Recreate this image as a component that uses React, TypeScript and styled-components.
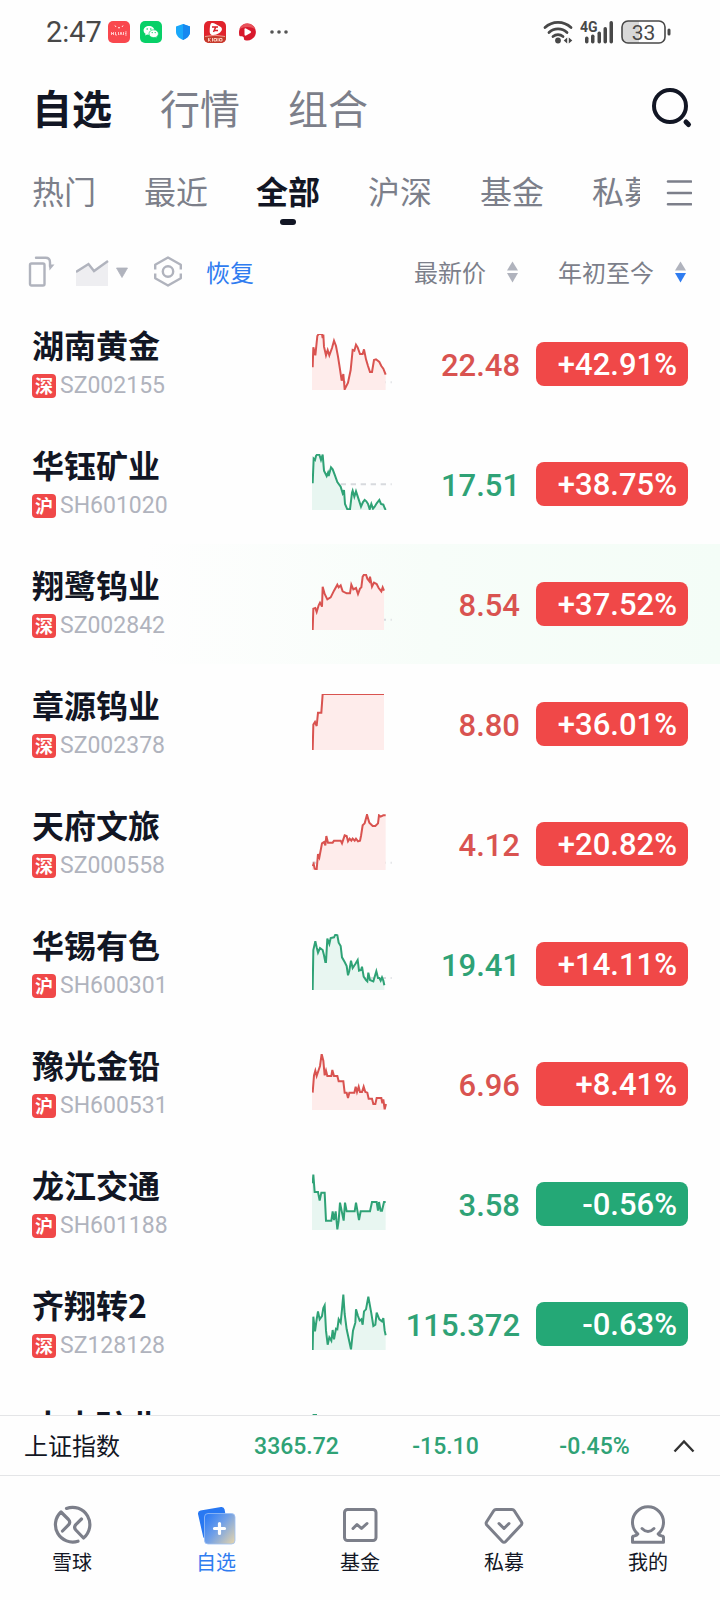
import React from "react";
import styled, { createGlobalStyle } from "styled-components";

const RED = "#f04848";
const GREEN = "#24a876";
const LINE_RED = "#d95350";
const LINE_GREEN = "#2fa276";
const INK = "#121624";
const GREY = "#7c7f8a";
const PALE = "#b0b3bd";
const BLUE = "#2f7cf0";

const CJK = `"Noto Sans CJK SC", sans-serif`;
const NUM = `Roboto, "Noto Sans CJK SC", sans-serif`;

const GlobalStyle = createGlobalStyle`
  * { box-sizing: border-box; }
  body { margin: 0; background: #fefefe; color: ${INK}; font-family: ${CJK}; }
  button { border: 0; padding: 0; margin: 0; background: none; font: inherit; color: inherit; cursor: pointer; }
  svg { display: block; flex: none; }
`;

const Screen = styled.div`
  height: 100vh;
  display: flex;
  flex-direction: column;
  background: #fefefe;
`;

/* ---------- status bar ---------- */

const StatusBar = styled.div`
  flex: none;
  height: 64px;
  padding: 0 49px 0 46px;
  display: flex;
  align-items: center;
  justify-content: space-between;
  color: #484848;
  font-family: ${NUM};
`;

const StatusGroup = styled.div<{ $gap: number }>`
  display: flex;
  align-items: center;
  gap: ${(p) => p.$gap}px;
`;

const Clock = styled.time`
  font-size: 29px;
  line-height: 32px;
`;

/* ---------- page header ---------- */

const Header = styled.header`
  flex: none;
  height: 88px;
  padding: 0 26px 0 32px;
  display: flex;
  align-items: center;
  justify-content: space-between;
`;

const Sections = styled.nav`
  display: flex;
  gap: 48px;
  padding-bottom: 2px;
`;

const SectionLink = styled.a<{ $active?: boolean }>`
  font-size: 40px;
  line-height: 48px;
  font-weight: ${(p) => (p.$active ? 700 : 400)};
  color: ${(p) => (p.$active ? INK : GREY)};
  text-decoration: none;
`;

const GroupBar = styled.div`
  flex: none;
  height: 88px;
  padding: 0 28px 8px 32px;
  display: flex;
  align-items: stretch;
  justify-content: space-between;
  gap: 26px;
`;

const GroupTabs = styled.div`
  flex: 1;
  min-width: 0;
  overflow: hidden;
  display: flex;
  gap: 48px;
`;

const GroupTab = styled.button<{ $active?: boolean }>`
  position: relative;
  flex: none;
  padding-bottom: 4px;
  font-size: 32px;
  line-height: 40px;
  white-space: nowrap;
  font-weight: ${(p) => (p.$active ? 700 : 400)};
  color: ${(p) => (p.$active ? INK : GREY)};
  &::after {
    content: "";
    display: ${(p) => (p.$active ? "block" : "none")};
    position: absolute;
    left: 50%;
    bottom: 7px;
    width: 16px;
    height: 6px;
    margin-left: -8px;
    border-radius: 3px;
    background: ${INK};
  }
`;

const IconButton = styled.button`
  display: flex;
  align-items: center;
`;

/* ---------- quotes table ---------- */

const ListArea = styled.main`
  flex: 1;
  min-height: 0;
  overflow-y: auto;
  scrollbar-width: none;
`;

const Quotes = styled.table`
  width: 100%;
  table-layout: fixed;
  border-collapse: collapse;
`;

const NameCol = styled.col``;
const ChartCol = styled.col`
  width: 88px;
`;
const PriceCol = styled.col`
  width: 120px;
`;
const ChangeCol = styled.col`
  width: 200px;
`;

const HeadCell = styled.th<{ $right?: number }>`
  height: 64px;
  padding: 0 ${(p) => p.$right ?? 0}px 0 0;
  font-weight: 400;
  color: ${GREY};
`;

const Tools = styled.div`
  display: flex;
  align-items: center;
  gap: 20px;
  padding-left: 28px;
`;

const Restore = styled.button`
  font-size: 24px;
  line-height: 32px;
  color: ${BLUE};
`;

const SortButton = styled.button`
  display: flex;
  align-items: center;
  gap: 20px;
  margin-left: auto;
  font-size: 24px;
  line-height: 32px;
  white-space: nowrap;
`;

const Row = styled.tr<{ $flash?: boolean }>`
  height: 120px;
  background: ${(p) => (p.$flash ? "linear-gradient(90deg, #fefefe 20%, #f7fdf9 60%, #f4fdf7 100%)" : "none")};
`;

const Cell = styled.td<{ $top: number; $left?: number; $right?: number }>`
  padding: ${(p) => p.$top}px ${(p) => p.$right ?? 0}px 0 ${(p) => p.$left ?? 0}px;
  vertical-align: top;
`;

const StockName = styled.div`
  font-size: 32px;
  line-height: 40px;
  font-weight: 700;
  white-space: nowrap;
`;

const CodeLine = styled.div`
  display: flex;
  align-items: center;
  gap: 4px;
  margin-top: 10px;
  font-family: ${NUM};
  font-size: 23px;
  line-height: 24px;
  color: ${PALE};
`;

const Market = styled.span`
  width: 24px;
  height: 24px;
  border-radius: 4px;
  background: ${RED};
  color: #fff;
  font-family: ${CJK};
  font-size: 18px;
  font-weight: 700;
  line-height: 22px;
  text-align: center;
`;

const Price = styled.div<{ $up: boolean }>`
  font-family: ${NUM};
  font-size: 31px;
  font-weight: 500;
  line-height: 44px;
  text-align: right;
  color: ${(p) => (p.$up ? LINE_RED : LINE_GREEN)};
`;

const Change = styled.button<{ $up: boolean }>`
  display: block;
  width: 100%;
  height: 44px;
  padding: 2px 11px 0 0;
  border-radius: 8px;
  background: ${(p) => (p.$up ? RED : GREEN)};
  color: #fff;
  font-family: ${NUM};
  font-size: 31px;
  font-weight: 500;
  line-height: 42px;
  text-align: right;
`;

/* ---------- index bar and bottom navigation ---------- */

const IndexBar = styled.section`
  flex: none;
  height: 61px;
  padding: 0 24px;
  display: grid;
  grid-template-columns: 198px 1fr 1fr 1fr 27px;
  align-items: center;
  border-top: 1px solid #e4e5e7;
  border-bottom: 1px solid #e4e5e7;
`;

const IndexName = styled.span`
  padding-bottom: 2px;
  font-size: 24px;
  line-height: 32px;
`;

const IndexValue = styled.span`
  padding-top: 2px;
  font-family: ${NUM};
  font-size: 23px;
  font-weight: 500;
  line-height: 32px;
  text-align: center;
  color: ${LINE_GREEN};
`;

const BottomNav = styled.nav`
  flex: none;
  height: 124px;
  display: flex;
`;

const NavItem = styled.a<{ $active?: boolean }>`
  flex: 1;
  display: flex;
  flex-direction: column;
  align-items: center;
  gap: 5px;
  padding-top: 29px;
  font-size: 20px;
  line-height: 24px;
  color: ${(p) => (p.$active ? BLUE : INK)};
  text-decoration: none;
`;

/* ---------- data ---------- */

type Stock = {
  name: string;
  points: string;
  up: boolean;
  quote?: { market: string; code: string; price: string; change: string };
  flash?: boolean;
  base?: number;
};

const stocks: Stock[] = [
  {
    name: "湖南黄金", up: true, base: 145,
    quote: { market: "深", code: "SZ002155", price: "22.48", change: "+42.91%" },
    points: "2,100 4,40 10,64 16,6 20,0 30,0 32,12 34,2 36,38 42,64 47,48 52,64 60,42 66,20 72,36 78,68 84,106 89,140 94,120 98,166 108,146 116,108 122,48 127,50 132,32 137,40 144,60 152,60 156,46 162,76 168,96 174,114 180,114 186,78 192,76 202,84 208,96 214,104 221,122",
  },
  {
    name: "华钰矿业", up: false, base: 91,
    quote: { market: "沪", code: "SH601020", price: "17.51", change: "+38.75%" },
    points: "2,88 5,14 9,18 12,6 15,2 22,2 27,18 32,2 36,50 44,66 48,56 50,66 57,40 62,46 68,62 76,84 86,98 92,118 96,108 99,150 106,166 114,166 120,116 122,110 127,128 132,112 140,136 147,158 153,144 158,138 163,142 168,150 173,166 178,150 183,164 188,158 194,148 202,138 207,150 214,152 218,162 221,168",
  },
  {
    name: "翔鹭钨业", up: true, flash: true, base: 137,
    quote: { market: "深", code: "SZ002842", price: "8.54", change: "+37.52%" },
    points: "2,168 4,104 10,102 14,114 20,94 24,86 30,98 32,38 38,60 46,76 56,70 66,50 76,32 80,40 86,34 92,52 104,58 114,58 118,32 124,46 132,42 138,60 144,44 148,40 152,8 156,2 162,2 166,14 172,22 174,8 180,38 186,26 194,30 200,42 208,52 212,40 216,50",
  },
  {
    name: "章源钨业", up: true,
    quote: { market: "深", code: "SZ002378", price: "8.80", change: "+36.01%" },
    points: "2,168 4,92 9,84 14,96 18,56 28,56 32,0 216,0",
  },
  {
    name: "天府文旅", up: true, base: 146,
    quote: { market: "深", code: "SZ000558", price: "4.12", change: "+20.82%" },
    points: "2,156 5,150 8,164 14,166 18,120 22,130 30,88 36,84 40,94 43,66 48,86 62,86 66,80 86,80 90,88 98,64 104,66 108,82 113,74 118,80 122,74 128,80 132,74 138,82 144,80 147,66 152,34 158,28 165,2 172,26 182,36 190,36 198,28 201,4 206,8 214,4 221,4",
  },
  {
    name: "华锡有色", up: false, base: 132,
    quote: { market: "沪", code: "SH600301", price: "19.41", change: "+14.11%" },
    points: "2,168 4,48 10,22 14,40 18,56 24,42 32,48 36,64 40,84 42,84 46,14 52,30 56,12 66,10 70,2 76,4 80,26 86,36 90,70 98,84 104,96 108,124 112,110 117,80 122,102 130,90 137,78 141,110 147,108 150,98 155,128 162,138 166,142 169,116 174,138 184,142 193,112 198,132 202,132 206,140 210,130 214,140 217,154",
  },
  {
    name: "豫光金铅", up: true,
    quote: { market: "沪", code: "SH600531", price: "6.96", change: "+8.41%" },
    points: "2,116 6,64 10,50 14,66 20,48 24,36 29,0 34,20 38,64 42,50 46,66 58,66 61,48 66,66 76,66 80,82 94,82 98,116 104,116 108,132 112,116 127,116 131,98 135,114 140,98 144,114 150,114 155,98 160,114 166,116 170,134 180,134 184,150 190,150 194,132 208,132 211,148 214,136 218,166 222,150",
  },
  {
    name: "龙江交通", up: false,
    quote: { market: "沪", code: "SH601188", price: "3.58", change: "-0.56%" },
    points: "2,28 4,2 8,54 18,54 23,80 28,56 38,56 42,140 58,140 62,112 66,138 71,112 76,166 80,140 84,86 90,116 95,140 99,86 104,112 128,112 132,86 141,138 146,112 174,112 180,84 194,84 198,110 201,84 206,110 210,110 216,84 221,84",
  },
  {
    name: "齐翔转2", up: false,
    quote: { market: "深", code: "SZ128128", price: "115.372", change: "-0.63%" },
    points: "2,168 4,68 9,112 14,76 18,52 23,76 30,66 34,42 38,34 42,110 47,152 52,130 58,140 62,108 66,136 72,104 76,106 80,76 86,86 90,46 94,2 98,60 104,106 117,166 123,110 130,86 132,46 138,66 143,80 148,76 152,92 156,52 162,46 169,8 178,58 184,96 190,92 194,56 202,76 210,82 214,72 218,110 221,124",
  },
  {
    name: "大中矿业", up: false,
    points: "2,20 5,0 12,2 16,40 40,60 80,50 120,90 160,110 221,120",
  },
];

function Sparkline({ points, up, base }: { points: string; up: boolean; base?: number }) {
  const lastX = points.slice(points.lastIndexOf(" ") + 1).split(",")[0];
  const firstY = points.split(" ")[0].split(",")[1];
  return (
    <svg width="80" height="56" viewBox="0 0 240 168" aria-hidden="true">
      {base !== undefined && (
        <line x1="-4" x2="239" y1={base} y2={base} stroke="#d8dade" strokeWidth="6" strokeDasharray="16 14" />
      )}
      <polygon points={`0,168 0,${firstY} ${points} ${lastX},168`} fill={up ? "#feeceb" : "#e8f6f1"} />
      <polyline points={points} fill="none" stroke={up ? LINE_RED : LINE_GREEN} strokeWidth="6" strokeLinejoin="miter" />
    </svg>
  );
}

function SortArrows({ down }: { down?: boolean }) {
  return (
    <svg width="14" height="22" viewBox="0 0 14 22" aria-hidden="true">
      <path d="M6.500 0.500 12 9.500H1Z" fill={PALE} />
      <path d="M6.500 21.500 12 12H1Z" fill={down ? BLUE : PALE} />
    </svg>
  );
}

function AppNotices() {
  return (
    <StatusGroup $gap={10} aria-hidden="true">
      <svg width="22" height="22" viewBox="0 0 22 22">
        <rect width="22" height="22" rx="5" fill="#f9484e" />
        <path d="M7 4.500 8 6M15 4.500 14 6M10 6.500q1 1 2 0" stroke="#fff" strokeWidth="0.900" fill="none" />
        <path d="M3.500 11v3M5.500 11v3M3.500 12.500h2M7.500 11v3h1.500M10.500 11v3M12 14l1-3 1 3M15.500 11v3M17 11h1.800M17 12.500h1.500M17 14h1.800" stroke="#ffd4d4" strokeWidth="0.900" fill="none" />
      </svg>
      <svg width="22" height="22" viewBox="0 0 22 22">
        <rect width="22" height="22" rx="5" fill="#08d068" />
        <path d="M9 5C6 5 3.600 7 3.600 9.400c0 1.400.8 2.600 2 3.400l-.5 1.700 2-1c.6.2 1.200.3 1.900.3C12 13.800 14.400 11.800 14.400 9.400S12 5 9 5Z" fill="#fff" />
        <path d="M13.700 8.800c-2.600 0-4.700 1.700-4.700 3.900s2.100 3.900 4.700 3.900c.6 0 1.100-.1 1.600-.3l1.700.9-.4-1.500c1.100-.7 1.800-1.800 1.800-3 0-2.200-2.100-3.900-4.700-3.900Z" fill="#fff" stroke="#08d068" strokeWidth="0.700" />
        <g fill="#08d068"><circle cx="7.200" cy="8" r=".8" /><circle cx="10.800" cy="8" r=".8" /><circle cx="12.200" cy="11.600" r=".7" /><circle cx="15.200" cy="11.600" r=".7" /></g>
      </svg>
      <svg width="22" height="22" viewBox="0 0 22 22">
        <path d="M11 3 18 5.500v5.500c0 3.500-3 6.300-7 8-4-1.700-7-4.500-7-8V5.500Z" fill="#1aa8fa" />
        <path d="M11 3 18 5.500v5.500c0 3.500-3 6.300-7 8Z" fill="#1688f0" />
      </svg>
      <svg width="22" height="22" viewBox="0 0 22 22">
        <rect width="22" height="22" rx="5" fill="#e0232c" />
        <path d="M0 15h22v2a5 5 0 0 1-5 5H5a5 5 0 0 1-5-5Z" fill="#c63a2c" />
        <path d="M7 2.500c1-1 3-.4 4.500.4l4.500 2.600c1.800 1 2.500 2.500 1.500 4.200-1.500 2.500-5 4.300-8.500 4.300-2.800 0-3.500-2-3.300-4.500C5.800 7 6 3.500 7 2.500Z" fill="#fff" />
        <path d="M8 6h6M11.500 6.500 9.500 11M10 9.500h4" stroke="#d8202a" strokeWidth="1.500" fill="none" />
        <path d="M1 15.500q10-2.500 20 0" stroke="#f7b9a8" strokeWidth="0.800" fill="none" />
        <path d="M4.500 17v3.500M6.500 17l-1.500 1.700L6.500 20.500M8.500 17v3.500M10 17.500h2.500v2.500H10ZM14 17v3.500M15.500 17.500H18v2.500h-2.500Z" stroke="#ffd9cc" strokeWidth="0.900" fill="none" />
      </svg>
      <svg width="22" height="22" viewBox="0 0 22 22">
        <path d="M11.300 2.500a8.500 8.500 0 1 1-2.800 16.500c-.8-.6-.3-2-1-3-.9-1-2.500-.2-4-1C1.700 9 5 2.500 11.300 2.500Z" fill="#d8182c" />
        <path d="M11.300 2.500a8.500 8.500 0 0 0-8 5.500q8-4 16 0a8.500 8.500 0 0 0-8-5.500Z" fill="#e8525a" />
        <path d="M8.500 8.300q0-1.500 1.500-.8l4.500 2.600q1.200.9 0 1.800L10 14.500q-1.500.6-1.500-1Z" fill="#fff" />
      </svg>
      <svg width="22" height="22" viewBox="0 0 22 22" fill="#555">
        <circle cx="4" cy="11" r="1.800" /><circle cx="11" cy="11" r="1.800" /><circle cx="18" cy="11" r="1.800" />
      </svg>
    </StatusGroup>
  );
}

function Signals() {
  return (
    <StatusGroup $gap={7}>
      <svg width="30" height="24" viewBox="0 0 30 24" fill="none" stroke="#484848" strokeWidth="2.800" strokeLinecap="round" aria-hidden="true">
        <path d="M2 7.500a19 19 0 0 1 26 0M6 12.500a13 13 0 0 1 18 0M10 16.500a7.500 7.500 0 0 1 10 0" />
        <circle cx="15" cy="20.500" r="2.900" fill="#484848" stroke="none" />
        <path d="M24.200 17.500v6l-3.500-3ZM25.800 17.500v6l3.500-3Z" fill="#484848" stroke="none" />
      </svg>
      <svg width="34" height="24" viewBox="0 0 34 24" aria-hidden="true">
        <text x="0" y="12" fontFamily="Roboto, sans-serif" fontSize="14" fontWeight="700" fill="#484848">4G</text>
        <g fill="#484848">
          <rect x="5" y="16.500" width="3.500" height="7" rx="1.700" />
          <rect x="11" y="14.500" width="3.500" height="9" rx="1.700" />
          <rect x="17.500" y="11.500" width="3.500" height="12" rx="1.700" />
          <rect x="23.500" y="7" width="3.500" height="16.500" rx="1.700" />
          <rect x="29.500" y="1" width="3.500" height="22.500" rx="1.700" />
        </g>
      </svg>
      <svg width="50" height="24" viewBox="0 0 50 24" role="img" aria-label="33%">
        <path d="M18 1H7a6 6 0 0 0-6 6v10a6 6 0 0 0 6 6h11Z" fill="#d8d8d8" />
        <rect x="1" y="1" width="43" height="22" rx="6" fill="none" stroke="#484848" strokeWidth="1.600" />
        <rect x="46.500" y="8.500" width="3" height="7" rx="1.500" fill="#484848" />
        <text x="22.500" y="19.500" textAnchor="middle" fontFamily="Roboto, sans-serif" fontSize="21" fill="#484848">33</text>
      </svg>
    </StatusGroup>
  );
}

const navIcons = {
  ball: (
    <svg width="40" height="40" viewBox="0 0 40 40" fill="none" stroke={GREY} strokeWidth="3.200" strokeLinecap="round" strokeLinejoin="round">
      <path d="M14.500 3.400A17.300 17.300 0 0 1 31.500 33L23.800 25q-2.400-2.600 0-5.400L29.500 14" />
      <path d="M26 36.200A17.300 17.300 0 0 1 9 7L16.500 14.500q2.400 2.600 0 5.400L10.500 26" />
    </svg>
  ),
  watch: (
    <svg width="40" height="40" viewBox="0 0 40 40">
      <defs>
        <linearGradient id="watchFace" x1="0" y1="0.100" x2="1" y2="0.900">
          <stop offset="0" stopColor="#2b7bf6" />
          <stop offset="0.450" stopColor="#6f9fe8" />
          <stop offset="1" stopColor="#e0d2ae" />
        </linearGradient>
      </defs>
      <path d="M4.500 5.500 25 2q3-.4 3.600 2.500L33 30 9 33.500q-1.500 0-1.900-2L2 9Q1.700 6 4.500 5.500Z" fill="#2878f2" />
      <rect x="8.500" y="8.500" width="30.500" height="30.500" rx="3.500" fill="url(#watchFace)" stroke="#9cc0f5" strokeWidth="0.800" />
      <path d="M23.500 18.500v10M18.500 23.500h10" stroke="#fff" strokeWidth="3.200" strokeLinecap="round" />
    </svg>
  ),
  fund: (
    <svg width="40" height="40" viewBox="0 0 40 40" fill="none" stroke={GREY} strokeWidth="3" strokeLinecap="round" strokeLinejoin="round">
      <rect x="4.500" y="4.500" width="31.500" height="31" rx="3" />
      <path d="M13 23.500 17 19.500 21.500 23.500 27 18.500" />
    </svg>
  ),
  diamond: (
    <svg width="40" height="40" viewBox="0 0 40 40" fill="none" stroke={GREY} strokeWidth="3" strokeLinecap="round" strokeLinejoin="round">
      <path d="M12 4.500H28q1.500 0 2.300 1.300L37.500 17q.9 1.500-.3 3L21.700 36.500q-1.700 1.700-3.400 0L2.800 20q-1.200-1.500-.3-3L9.700 5.800Q10.500 4.500 12 4.500Z" />
      <path d="M15 18.500 20 23.500 25 18.500" />
    </svg>
  ),
  me: (
    <svg width="40" height="40" viewBox="0 0 40 40" fill="none" stroke={GREY} strokeWidth="3" strokeLinecap="round" strokeLinejoin="round">
      <path d="M9.800 29A15.500 15.500 0 1 1 30.200 29Q31 30.500 34 31Q35.500 31.200 35.500 32.500V37.300H4.500V32.500Q4.500 31.200 6 31Q9 30.500 9.800 29Z" />
      <path d="M14 23.500q6 6 12 0" />
    </svg>
  ),
};

const navItems: { label: string; icon: keyof typeof navIcons; active?: boolean }[] = [
  { label: "雪球", icon: "ball" },
  { label: "自选", icon: "watch", active: true },
  { label: "基金", icon: "fund" },
  { label: "私募", icon: "diamond" },
  { label: "我的", icon: "me" },
];

const groups = ["热门", "最近", "全部", "沪深", "基金", "私募"];

export default function App() {
  return (
    <>
      <GlobalStyle />
      <Screen>
        <StatusBar>
          <StatusGroup $gap={6}>
            <Clock>2:47</Clock>
            <AppNotices />
          </StatusGroup>
          <Signals />
        </StatusBar>

        <Header>
          <Sections>
            <SectionLink href="#watchlist" $active aria-current="page">自选</SectionLink>
            <SectionLink href="#market">行情</SectionLink>
            <SectionLink href="#portfolio">组合</SectionLink>
          </Sections>
          <IconButton aria-label="搜索">
            <svg width="44" height="44" viewBox="0 0 44 44" fill="none" stroke={INK} strokeLinecap="round">
              <circle cx="20" cy="20" r="16" strokeWidth="4" />
              <path d="M36 36 38.500 38.500" strokeWidth="5" />
            </svg>
          </IconButton>
        </Header>

        <GroupBar>
          <GroupTabs>
            {groups.map((g) => (
              <GroupTab key={g} $active={g === "全部"}>{g}</GroupTab>
            ))}
          </GroupTabs>
          <IconButton aria-label="分组管理">
            <svg width="26" height="28" viewBox="0 0 26 28" stroke={GREY} strokeWidth="2.600" strokeLinecap="round">
              <path d="M2 3.500h23M2 15h23M2 26.300h23" />
            </svg>
          </IconButton>
        </GroupBar>

        <ListArea>
          <Quotes>
            <colgroup>
              <NameCol />
              <ChartCol />
              <PriceCol />
              <ChangeCol />
            </colgroup>
            <thead>
              <tr>
                <HeadCell colSpan={2}>
                  <Tools>
                    <IconButton aria-label="横屏">
                      <svg width="28" height="32" viewBox="0 0 28 32" fill="none" stroke={PALE} strokeWidth="2.400" strokeLinecap="round">
                        <rect x="2" y="7.500" width="14.500" height="22" rx="1.500" />
                        <path d="M8 1.800h9.500q4.500 0 4.500 4.500v4" />
                        <path d="M21 8.500h5.500L21.500 14.500Z" fill={PALE} stroke="none" />
                      </svg>
                    </IconButton>
                    <IconButton aria-label="走势图">
                      <svg width="56" height="32" viewBox="0 0 56 32">
                        <path d="M0 16 12.500 8 18 15 32 6V30H0Z" fill="#eeeef1" />
                        <path d="M0 16 12.500 8 18 15 32 5" fill="none" stroke={PALE} strokeWidth="2.400" />
                        <path d="M40.500 12h11L46 21.500Z" fill={PALE} stroke={PALE} strokeWidth="0.800" strokeLinejoin="round" />
                      </svg>
                    </IconButton>
                    <IconButton aria-label="设置">
                      <svg width="34" height="32" viewBox="0 0 34 32" fill="none" stroke={PALE} strokeWidth="2.400" strokeLinejoin="round">
                        <path d="M3.200 13.500V8.800L16 1.500 28.800 8.800v4.700M28.800 17.500v4.700L16 29.500 3.200 22.200v-4.700" />
                        <circle cx="16" cy="15.500" r="5.200" />
                      </svg>
                    </IconButton>
                    <Restore>恢复</Restore>
                  </Tools>
                </HeadCell>
                <HeadCell scope="col">
                  <SortButton>最新价<SortArrows /></SortButton>
                </HeadCell>
                <HeadCell scope="col" $right={32} aria-sort="descending">
                  <SortButton>年初至今<SortArrows down /></SortButton>
                </HeadCell>
              </tr>
            </thead>
            <tbody>
              {stocks.map(({ name, points, up, base, flash, quote }) => (
                <Row key={name} $flash={flash}>
                  <Cell $top={20} $left={32}>
                    <StockName>{name}</StockName>
                    {quote && <CodeLine><Market>{quote.market}</Market>{quote.code}</CodeLine>}
                  </Cell>
                  <Cell $top={30}>
                    <Sparkline points={points} up={up} base={base} />
                  </Cell>
                  <Cell $top={40}>
                    {quote && <Price $up={up}>{quote.price}</Price>}
                  </Cell>
                  <Cell $top={38} $left={16} $right={32}>
                    {quote && <Change $up={quote.change.startsWith("+")}>{quote.change}</Change>}
                  </Cell>
                </Row>
              ))}
            </tbody>
          </Quotes>
        </ListArea>

        <IndexBar>
          <IndexName>上证指数</IndexName>
          <IndexValue>3365.72</IndexValue>
          <IndexValue>-15.10</IndexValue>
          <IndexValue>-0.45%</IndexValue>
          <IconButton aria-label="展开">
            <svg width="27" height="20" viewBox="0 0 27 20" fill="none" stroke="#333" strokeWidth="2.400">
              <path d="M5.500 15.500 15 5.500 24.500 15.500" />
            </svg>
          </IconButton>
        </IndexBar>

        <BottomNav>
          {navItems.map((n) => (
            <NavItem key={n.label} href={`#${n.icon}`} $active={n.active}>
              {navIcons[n.icon]}
              {n.label}
            </NavItem>
          ))}
        </BottomNav>
      </Screen>
    </>
  );
}
